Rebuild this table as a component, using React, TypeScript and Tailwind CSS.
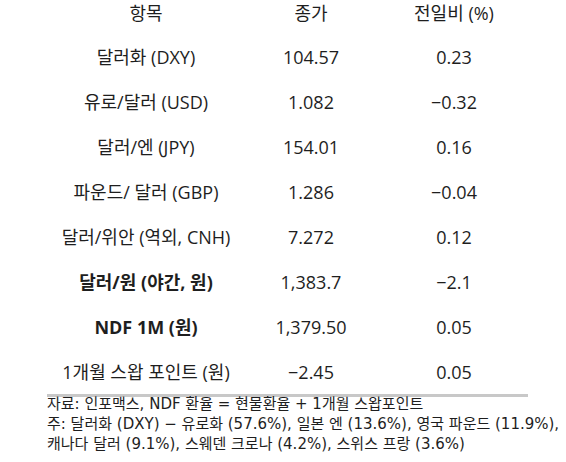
import React from "react";

const rows: { name: string; close: string; chg: string; bold?: boolean }[] = [
  { name: "달러화 (DXY)", close: "104.57", chg: "0.23" },
  { name: "유로/달러 (USD)", close: "1.082", chg: "−0.32" },
  { name: "달러/엔 (JPY)", close: "154.01", chg: "0.16" },
  { name: "파운드/ 달러 (GBP)", close: "1.286", chg: "−0.04" },
  { name: "달러/위안 (역외, CNH)", close: "7.272", chg: "0.12" },
  { name: "달러/원 (야간, 원)", close: "1,383.7", chg: "−2.1", bold: true },
  { name: "NDF 1M (원)", close: "1,379.50", chg: "0.05", bold: true },
  { name: "1개월 스왑 포인트 (원)", close: "−2.45", chg: "0.05" },
];

const font = { fontFamily: '"Open Sans", "Noto Sans CJK KR", sans-serif' };
const noteFont = { fontFamily: '"DejaVu Sans", "Noto Sans CJK KR", sans-serif' };

export default function App() {
  return (
    <div
      className="w-[566px] h-[462px] bg-white text-[#1e1e1e] overflow-hidden"
      style={font}
    >
      <div className="pl-[47px]">
        <div className="grid grid-cols-[198px_132px_154px] h-[35px] items-start">
          <div className="h-[26px] flex items-center justify-center text-[18px]">항목</div>
          <div className="h-[26px] flex items-center justify-center text-[18px]">종가</div>
          <div className="h-[26px] flex items-center justify-center text-[18px]">전일비 (%)</div>
        </div>
        {rows.map((r) => (
          <div
            key={r.name}
            className="grid grid-cols-[198px_132px_154px] h-[45px] items-center text-[18px]"
          >
            <div className={"text-center " + (r.bold ? "font-bold" : "font-normal")}>{r.name}</div>
            <div className="text-center font-normal">{r.close}</div>
            <div className="text-center font-normal">{r.chg}</div>
          </div>
        ))}
        <div className="w-[481px] h-[3px] bg-[#c8c8c8] mt-[-1px]" />
        <div className="text-[15px] leading-[20px] mt-[-3px]" style={noteFont}>
          <div>자료: 인포맥스, NDF 환율 = 현물환율 + 1개월 스왑포인트</div>
          <div>주: 달러화 (DXY) − 유로화 (57.6%), 일본 엔 (13.6%), 영국 파운드 (11.9%),</div>
          <div>캐나다 달러 (9.1%), 스웨덴 크로나 (4.2%), 스위스 프랑 (3.6%)</div>
        </div>
      </div>
    </div>
  );
}
